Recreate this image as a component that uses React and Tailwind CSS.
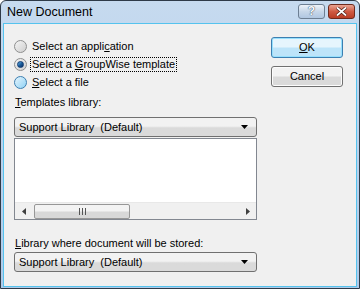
import React from 'react'

const font = { fontFamily: '"Liberation Sans", Arial, sans-serif' }

function Radio({ checked, hot }) {
    return (
        <span
            className={
                'relative w-[13px] h-[13px] rounded-full border flex items-center justify-center shrink-0 ' +
                (hot
                    ? 'border-[#3c7fb1] bg-gradient-to-br from-[#e4f4fc] to-[#8fd2f5]'
                    : 'border-[#8e8f8f] bg-gradient-to-br from-[#f4f4f4] to-[#cfcfcf]')
            }
        >
            {checked && (
                <span className="w-[7px] h-[7px] rounded-full bg-gradient-to-br from-[#6ab6e8] via-[#1b5f9e] to-[#0a2a5c] border border-[#0d3a73]" />
            )}
        </span>
    )
}

function Combo() {
    return (
        <div className="h-[20px] rounded-[3px] border border-[#707070] bg-gradient-to-b from-[#f2f2f2] from-45% to-[#dadada] to-55% flex items-center pl-[4px] pr-[8px]">
            <span className="flex-1 text-[11px] leading-none">Support Library&nbsp; (Default)</span>
            <svg width="7" height="4" viewBox="0 0 7 4"><path d="M0 0h7L3.5 4z" fill="#000" /></svg>
        </div>
    )
}

export default function App() {
    return (
        <div className="w-[360px] h-[289px] flex flex-col border border-[#2e3a48] rounded-t-[6px] bg-gradient-to-b from-[#c6daef] to-[#aecbea] text-black" style={font}>
            {/* Title bar */}
            <div className="h-[22px] flex items-center pl-[6px] pr-[4px] shrink-0">
                <span className="flex-1 text-[12.5px]">New Document</span>
                <div className="flex items-center gap-[3px] -mt-[2px]">
                    <div className="w-[27px] h-[15px] rounded-[3px] border border-[#6d7f93] bg-gradient-to-b from-[#eef3f9] via-[#c7d7e9] to-[#b0c7e1] flex items-center justify-center text-[12px] font-bold text-[#f8fbff] [text-shadow:0_0_1px_#3d4d60,0_0_1px_#3d4d60]">?</div>
                    <div className="w-[27px] h-[15px] rounded-[3px] border border-[#6e2a1d] bg-gradient-to-b from-[#e8a493] via-[#cf5a43] to-[#b93d25] flex items-center justify-center">
                        <svg width="11" height="9" viewBox="0 0 11 9"><path d="M1 0.5L10 8.5M10 0.5L1 8.5" stroke="#4a1a12" strokeWidth="3.2" /><path d="M1 0.5L10 8.5M10 0.5L1 8.5" stroke="#fff" strokeWidth="1.8" /></svg>
                    </div>
                </div>
            </div>

            {/* Client area */}
            <div className="flex-1 mx-[2px] mb-[1px] border border-[#55c3ee] bg-[#f0f0f0] flex">
                <div className="w-[243px] ml-[10px] pt-[13px] flex flex-col text-[11px]">
                    <div className="h-[18px] flex items-center gap-[5px]">
                        <Radio />
                        <span>Select an appli<u>c</u>ation</span>
                    </div>
                    <div className="h-[18px] flex items-center gap-[5px]">
                        <Radio checked />
                        <span className="outline outline-1 outline-dotted outline-black px-[1px] -ml-[1px] leading-[13px]">Select a <u>G</u>roupWise template</span>
                    </div>
                    <div className="h-[18px] flex items-center gap-[5px]">
                        <Radio hot />
                        <span><u>S</u>elect a file</span>
                    </div>
                    <div className="mt-[4px] h-[14px] leading-[14px] pl-[1px]"><u>T</u>emplates library:</div>
                    <div className="mt-[8px]"><Combo /></div>
                    <div className="mt-[1px] h-[82px] border border-[#828790] bg-white flex flex-col">
                        <div className="flex-1" />
                        <div className="h-[17px] bg-[#f0f0f0] border-t border-[#e8e8e8] flex items-center">
                            <div className="w-[17px] flex justify-center">
                                <svg width="4" height="7" viewBox="0 0 4 7"><path d="M4 0v7L0 3.5z" fill="#3f3f3f" /></svg>
                            </div>
                            <div className="ml-[2px] w-[96px] h-[15px] rounded-[2px] border border-[#979797] bg-gradient-to-b from-[#f3f3f3] from-45% to-[#d8d8d8] to-55% flex items-center justify-center gap-[2px]">
                                <span className="w-px h-[7px] bg-[#555]" />
                                <span className="w-px h-[7px] bg-[#555]" />
                                <span className="w-px h-[7px] bg-[#555]" />
                            </div>
                            <div className="flex-1" />
                            <div className="w-[17px] flex justify-center">
                                <svg width="4" height="7" viewBox="0 0 4 7"><path d="M0 0v7L4 3.5z" fill="#3f3f3f" /></svg>
                            </div>
                        </div>
                    </div>
                    <div className="mt-[16px] h-[14px] leading-[14px] pl-[1px]"><u>L</u>ibrary where document will be stored:</div>
                    <div className="mt-[2px]"><Combo /></div>
                </div>
                <div className="ml-[14px] pt-[13px] w-[72px] flex flex-col text-[11px]">
                    <div className="h-[21px] rounded-[3px] border border-[#3c7fb1] bg-gradient-to-b from-[#e6f5fd] from-45% to-[#bde4f9] to-55% shadow-[inset_0_0_0_1px_#97e0fd] flex items-center justify-center"><span><u>O</u>K</span></div>
                    <div className="mt-[8px] h-[21px] rounded-[3px] border border-[#707070] bg-gradient-to-b from-[#f2f2f2] from-45% to-[#dadada] to-55% shadow-[inset_0_0_0_1px_#fcfcfc] flex items-center justify-center">Cancel</div>
                </div>
            </div>
        </div>
    )
}
